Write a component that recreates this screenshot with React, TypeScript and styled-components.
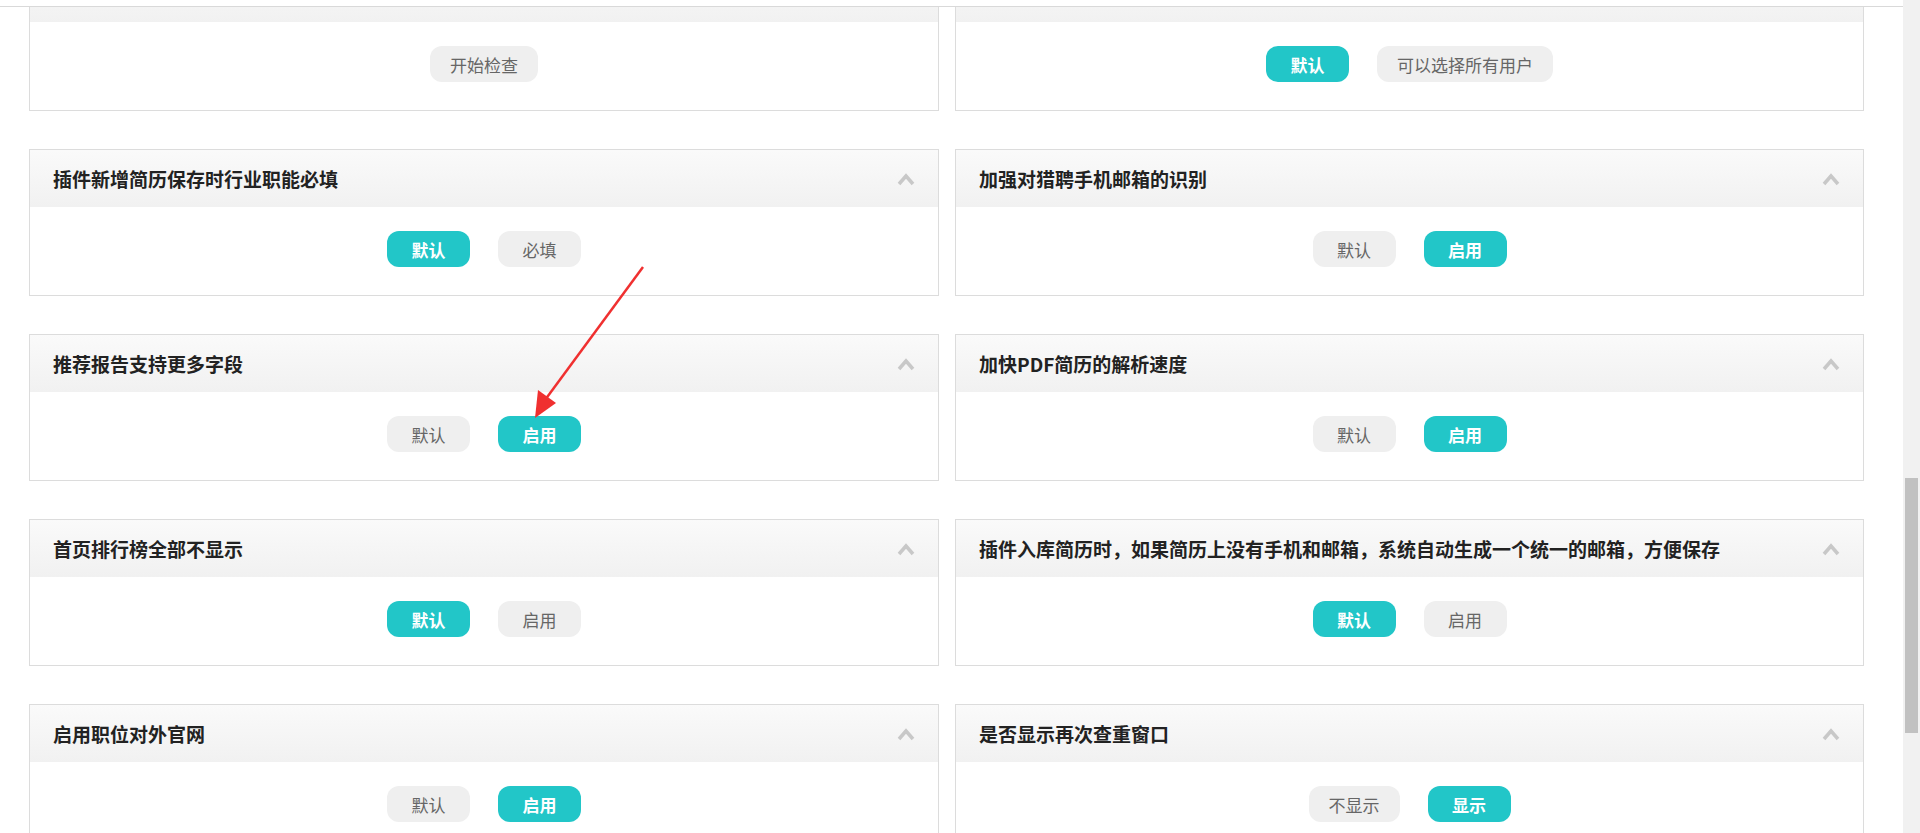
import React from "react";
import styled, { createGlobalStyle } from "styled-components";

const Global = createGlobalStyle`
  html, body { margin: 0; padding: 0; overflow: hidden; background: #fff; }
  body { font-family: "Microsoft YaHei", "Noto Sans CJK SC", sans-serif; }
`;

const Page = styled.div`
  position: relative;
  width: 1920px;
  height: 833px;
  overflow: hidden;
`;

const TopLine = styled.div`
  position: absolute;
  top: 0; left: 0; right: 17px;
  height: 6px;
  background: #fff;
  border-bottom: 1px solid #d9d9d9;
  z-index: 2;
`;

const Grid = styled.div`
  display: grid;
  grid-template-columns: 910px 909px;
  column-gap: 16px;
  row-gap: 38px;
  padding: 0 0 0 29px;
  margin-top: -36px;
`;

const Card = styled.div`
  border: 1px solid #dcdcdc;
  height: 145px;
  display: flex;
  flex-direction: column;
  box-sizing: border-box;
  height: 147px;
`;

const Header = styled.div`
  height: 57px;
  flex: none;
  background: linear-gradient(#fafafa, #f1f1f1);
  display: flex;
  align-items: center;
  justify-content: space-between;
  padding: 0 22px 0 23px;
`;

const Title = styled.div`
  font-size: 19px;
  font-weight: bold;
  color: #222;
`;

const Body = styled.div`
  flex: 1;
  display: flex;
  align-items: center;
  justify-content: center;
  gap: 28px;
  padding-bottom: 4px;
`;

const Pill = styled.div<{ $on?: boolean }>`
  min-width: 83px;
  padding: 0 20px;
  box-sizing: border-box;
  height: 36px;
  border-radius: 12px;
  display: flex;
  align-items: center;
  justify-content: center;
  font-size: 17px;
  background: ${(p) => (p.$on ? "#22c6c8" : "#efefef")};
  color: ${(p) => (p.$on ? "#fff" : "#666")};
  font-weight: ${(p) => (p.$on ? "bold" : "normal")};
`;

const Track = styled.div`
  position: absolute;
  top: 0; right: 0; bottom: 0;
  width: 17px;
  background: #f1f1f1;
`;
const Thumb = styled.div`
  position: absolute;
  top: 478px; left: 2px; right: 2px; height: 255px;
  background: #c1c1c1;
`;

const Arrow = styled.svg`
  position: absolute;
  left: 0; top: 0;
  pointer-events: none;
`;

const Chevron = () => (
  <svg width="20" height="14" viewBox="0 0 20 14">
    <path d="M3 12 L10 4 L17 12" stroke="#c8c8c8" strokeWidth="3.5" fill="none" />
  </svg>
);

type C = { title?: string; opts: [string, boolean][] };

const cards: C[] = [
  { opts: [["开始检查", false]] },
  { opts: [["默认", true], ["可以选择所有用户", false]] },
  { title: "插件新增简历保存时行业职能必填", opts: [["默认", true], ["必填", false]] },
  { title: "加强对猎聘手机邮箱的识别", opts: [["默认", false], ["启用", true]] },
  { title: "推荐报告支持更多字段", opts: [["默认", false], ["启用", true]] },
  { title: "加快PDF简历的解析速度", opts: [["默认", false], ["启用", true]] },
  { title: "首页排行榜全部不显示", opts: [["默认", true], ["启用", false]] },
  { title: "插件入库简历时，如果简历上没有手机和邮箱，系统自动生成一个统一的邮箱，方便保存", opts: [["默认", true], ["启用", false]] },
  { title: "启用职位对外官网", opts: [["默认", false], ["启用", true]] },
  { title: "是否显示再次查重窗口", opts: [["不显示", false], ["显示", true]] },
];

export default function App() {
  return (
    <Page>
      <Global />
      <TopLine />
      <Grid>
        {cards.map((c, i) => (
          <Card key={i}>
            <Header>
              <Title>{c.title ?? ""}</Title>
              {c.title && <Chevron />}
            </Header>
            <Body>
              {c.opts.map(([t, on]) => (
                <Pill key={t} $on={on}>{t}</Pill>
              ))}
            </Body>
          </Card>
        ))}
      </Grid>
      <Arrow width="1920" height="833">
        <line x1="643" y1="267" x2="545" y2="400" stroke="#f03030" strokeWidth="2.5" />
        <polygon points="535,418 538,390 556,403" fill="#f03030" />
      </Arrow>
      <Track><Thumb /></Track>
    </Page>
  );
}
